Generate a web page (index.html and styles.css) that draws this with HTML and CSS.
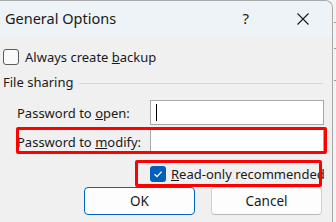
FILE: index.html
```html
<!DOCTYPE html>
<html lang="en">
<head>
  <meta charset="UTF-8" />
  <title>General Options</title>
  <link rel="stylesheet" href="styles.css">
</head>
<body>
  <div class="window">
    <div class="titlebar">
      <span class="title">General Options</span>
      <span class="help">?</span>
      <svg class="close" width="12" height="12" viewBox="0 0 12 12">
        <path d="M0.5 0.5 L11.5 11.5 M11.5 0.5 L0.5 11.5" stroke="#1a1a1a" stroke-width="1.1" fill="none"/>
      </svg>
    </div>

    <div class="content">
      <div class="check-row">
        <span class="checkbox"></span>
        <span>Always create <u>b</u>ackup</span>
      </div>

      <div class="group-title">
        <span>File sharing</span>
        <div class="group-line"></div>
      </div>

      <div class="field-row first">
        <span class="field-label">Password to <u>o</u>pen:</span>
        <div class="textbox"><span class="caret"></span></div>
      </div>

      <div class="field-row second">
        <span class="field-label">Password to <u>m</u>odify:</span>
        <div class="textbox"></div>
        <div class="mark mark-modify"></div>
      </div>

      <div class="check-row readonly">
        <span class="checkbox checked">
          <svg width="16" height="16" viewBox="0 0 16 16">
            <path d="M4.5 8.3 L7 10.6 L11.6 5.6" stroke="#fff" stroke-width="1.3" fill="none"/>
          </svg>
        </span>
        <span><u>R</u>ead-only recommended</span>
        <div class="mark mark-readonly"></div>
      </div>

      <div class="buttons">
        <button class="btn default">OK</button>
        <button class="btn">Cancel</button>
      </div>
    </div>
  </div>
  <div class="outside">
    <div class="edge" style="top: 22px"></div>
    <div class="edge" style="top: 48px"></div>
    <div class="edge" style="top: 80px"></div>
  </div>
</body>
</html>
```

FILE: styles.css
```css
body {
  margin: 0;
  width: 336px;
  height: 222px;
  overflow: hidden;
  display: flex;
  background: #f3f3f3;
  font-family: 'Noto Sans', 'Open Sans', sans-serif;
  font-size: 13px;
  color: #1a1a1a;
}

.window {
  width: 332px;
  height: 222px;
  border-top: 1px solid #a8a8a8;
  border-right: 1px solid #a8a8a8;
  border-top-right-radius: 8px;
  background: #f0f0f0;
  overflow: hidden;
  flex-shrink: 0;
}

.titlebar {
  height: 36px;
  background: #edf3f6;
  display: flex;
  align-items: center;
  padding-left: 5px;
}

.title {
  font-size: 14.5px;
  flex: 1;
  padding-bottom: 2px;
}

.help {
  font-size: 15px;
  margin-right: 48px;
  padding-bottom: 2px;
}

.close {
  margin-right: 23px;
}

.content {
  position: relative;
}

.check-row {
  display: flex;
  align-items: center;
  gap: 6px;
  margin: 12px 0 0 3px;
  height: 16px;
}

.checkbox {
  width: 14px;
  height: 14px;
  border: 1px solid #5c5c5c;
  border-radius: 3px;
  background: #fafafa;
  display: flex;
  align-items: center;
  justify-content: center;
}

.checkbox.checked {
  width: 16px;
  height: 16px;
  border: none;
  background: #005fb8;
}

.group-title {
  display: flex;
  align-items: center;
  margin: 10px 9px 0 3px;
  height: 14px;
}

.group-line {
  flex: 1;
  height: 1px;
  background: #d5d5d5;
  margin-left: 6px;
  margin-top: 2px;
}

.field-row {
  display: flex;
  align-items: center;
  padding-left: 17px;
  position: relative;
}

.field-row.first {
  margin-top: 11px;
}

.field-row.second {
  margin-top: 4px;
}

.field-label {
  width: 133px;
}

.textbox {
  width: 172px;
  height: 23px;
  border: 1px solid #a8a8a8;
  background: #fff;
  display: flex;
  align-items: center;
}

.caret {
  width: 1px;
  height: 17px;
  background: #000;
  margin-left: 5px;
}

.readonly {
  position: relative;
  margin: 12px 0 0 150px;
  gap: 5px;
}

.mark {
  position: absolute;
  border: 3px solid #ff0000;
  border-radius: 2px;
}

.mark-modify {
  left: 16px;
  top: -2px;
  width: 305px;
  height: 21px;
}

.mark-readonly {
  left: -15px;
  top: -6px;
  width: 181px;
  height: 21px;
}

.buttons {
  display: flex;
  gap: 16px;
  margin: 5px 0 0 84px;
}

.btn {
  width: 111px;
  height: 28px;
  background: #fdfdfd;
  border: 1px solid #d0d0d0;
  border-bottom-color: #b8b8b8;
  border-radius: 4px;
  font-family: 'Noto Sans', 'Open Sans', sans-serif;
  font-size: 13.5px;
  color: #1a1a1a;
  padding: 0;
}

.btn.default {
  border: 1px solid #0067c0;
}

.outside {
  flex: 1;
  position: relative;
}

.edge {
  position: absolute;
  left: 1px;
  right: 0;
  height: 1px;
  background: #9a9a9a;
}
```
